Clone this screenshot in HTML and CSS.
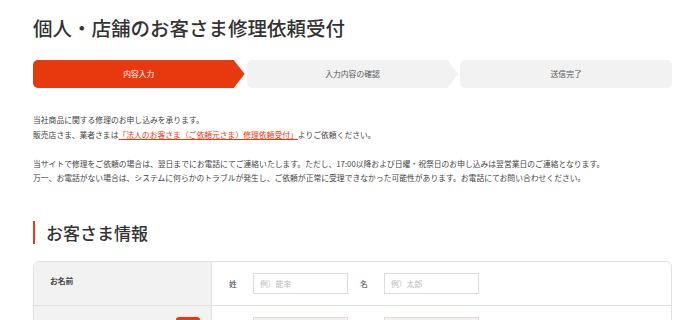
FILE: index.html
```html
<!DOCTYPE html>
<html lang="ja">
<head>
  <meta charset="UTF-8" />
  <meta name="viewport" content="width=device-width, initial-scale=1.0"/>
  <title>個人・店舗のお客さま修理依頼受付</title>
  <link rel="stylesheet" href="styles.css">
</head>
<body>
  <div class="page">
    <!-- ページタイトル -->
    <h1 class="page-title">個人・店舗のお客さま修理依頼受付</h1>

    <!-- ステップ表示 -->
    <ol class="steps">
      <li class="step is-current">内容入力</li>
      <li class="step">入力内容の確認</li>
      <li class="step step-last">送信完了</li>
    </ol>

    <!-- 説明文 -->
    <div class="intro">
      <p>当社商品に関する修理のお申し込みを承ります。<br>
      販売店さま、業者さまは<a href="#" class="intro-link">「法人のお客さま（ご依頼元さま）修理依頼受付」</a>よりご依頼ください。</p>
      <p>当サイトで修理をご依頼の場合は、翌日までにお電話にてご連絡いたします。ただし、17:00以降および日曜・祝祭日のお申し込みは翌営業日のご連絡となります。<br>
      万一、お電話がない場合は、システムに何らかのトラブルが発生し、ご依頼が正常に受理できなかった可能性があります。お電話にてお問い合わせください。</p>
    </div>

    <!-- お客さま情報 -->
    <h2 class="section-title">お客さま情報</h2>

    <div class="form-table">
      <div class="form-row">
        <div class="form-label">お名前</div>
        <div class="form-field">
          <label class="field-group">
            <span class="field-name">姓</span>
            <input type="text" class="text-input" placeholder="例）能率">
          </label>
          <label class="field-group">
            <span class="field-name">名</span>
            <input type="text" class="text-input" placeholder="例）太郎">
          </label>
        </div>
      </div>
      <div class="form-row">
        <div class="form-label">
          <span>フリガナ</span>
          <span class="badge">必須</span>
        </div>
        <div class="form-field">
          <label class="field-group">
            <span class="field-name">セイ</span>
            <input type="text" class="text-input is-required" placeholder="例）ノウリツ">
          </label>
          <label class="field-group">
            <span class="field-name">メイ</span>
            <input type="text" class="text-input is-required" placeholder="例）タロウ">
          </label>
        </div>
      </div>
    </div>
  </div>
</body>
</html>
```

FILE: styles.css
```css
/* 全体 */
html, body {
  margin: 0;
  padding: 0;
  background: #fff;
  color: #444;
  font-family: "Noto Sans CJK JP", "Noto Sans", sans-serif;
}

.page {
  padding: 0 28px 0 33px;
}

/* タイトル */
.page-title {
  margin: 0;
  padding-top: 15px;
  font-size: 19.5px;
  font-weight: 500;
  line-height: 25px;
  color: #333;
}

/* ステップ */
.steps {
  display: flex;
  gap: 2px;
  margin: 20px 0 0;
  padding: 0;
  list-style: none;
}

.step {
  flex: 1;
  height: 28px;
  line-height: 28px;
  text-align: center;
  font-size: 7.8px;
  color: #555;
  background: #f2f2f2;
  border-radius: 5px;
  clip-path: polygon(0 0, calc(100% - 11px) 0, 100% 50%, calc(100% - 11px) 100%, 0 100%);
}

.step.is-current {
  background: #e8380d;
  color: #fff;
}

.step-last {
  clip-path: none;
}

/* 説明文 */
.intro {
  margin-top: 25px;
  font-size: 7.8px;
  line-height: 14.5px;
}

.intro p {
  margin: 0 0 14.5px;
}

.intro-link {
  color: #e8380d;
  text-decoration: underline;
}

/* 見出し */
.section-title {
  margin: 35px 0 0;
  padding-left: 11px;
  border-left: 2px solid #e8380d;
  font-size: 17px;
  font-weight: 500;
  line-height: 23px;
  color: #333;
}

/* フォームテーブル */
.form-table {
  margin-top: 17px;
  border: 1px solid #e2e2e2;
  border-radius: 6px 6px 0 0;
  overflow: hidden;
}

.form-row {
  display: flex;
  border-bottom: 1px solid #e2e2e2;
}

.form-label {
  width: 178px;
  flex-shrink: 0;
  display: flex;
  justify-content: space-between;
  align-items: flex-start;
  padding: 13px 11px 0 16px;
  box-sizing: border-box;
  background: #f2f2f2;
  border-right: 1px solid #e2e2e2;
  font-size: 7.8px;
  font-weight: bold;
  color: #444;
}

.badge {
  display: inline-block;
  width: 24px;
  height: 14px;
  line-height: 14px;
  margin-top: -2px;
  text-align: center;
  border-radius: 3px;
  background: #e8380d;
  color: #fff;
  font-size: 7.5px;
}

.form-field {
  display: flex;
  gap: 12px;
  padding: 11px 0 11px 17px;
}

.field-group {
  display: flex;
  align-items: center;
  gap: 2px;
  font-size: 7.8px;
  color: #444;
}

.field-name {
  width: 22px;
  white-space: nowrap;
}

.text-input {
  width: 95px;
  height: 21px;
  box-sizing: border-box;
  padding: 0 6px;
  border: 1px solid #dcdcdc;
  border-radius: 0;
  font-family: inherit;
  font-size: 7.8px;
  color: #333;
  background: #fff;
}

.text-input::placeholder {
  color: #bbb;
}

.text-input.is-required {
  background: #fdeeee;
}
```
